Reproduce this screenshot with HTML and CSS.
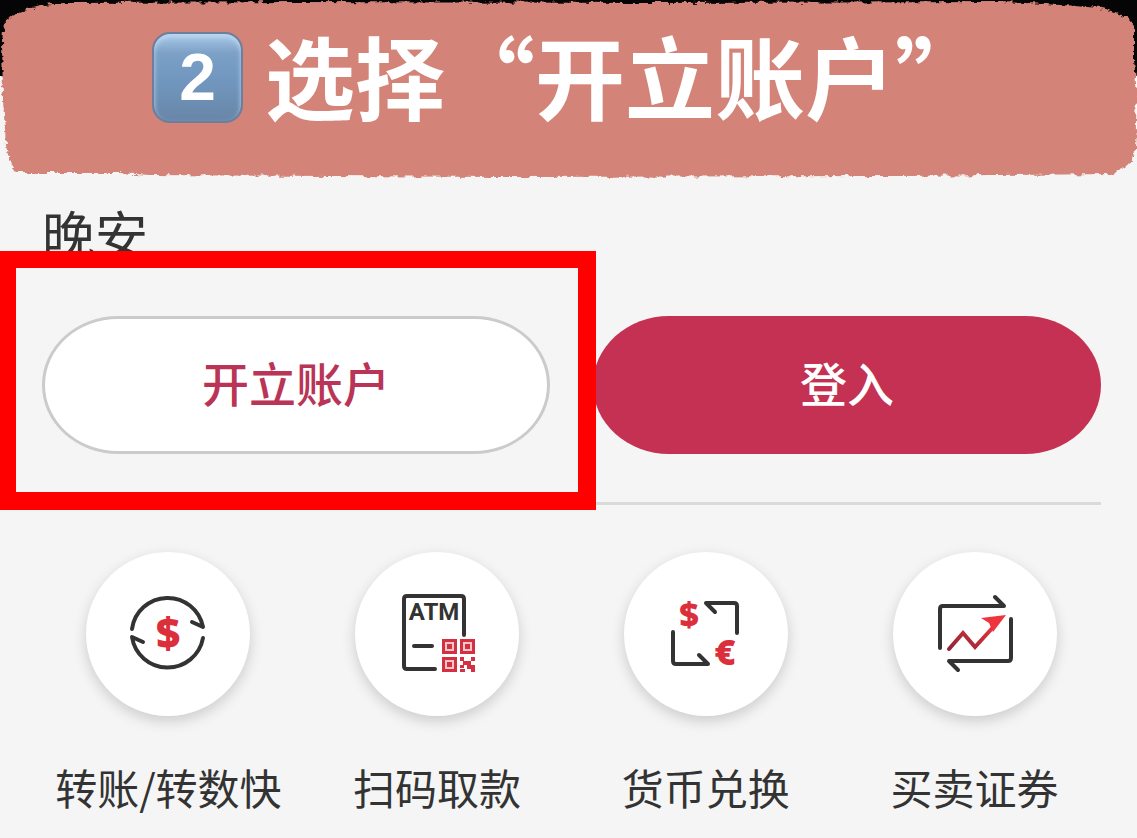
FILE: index.html
```html
<!DOCTYPE html>
<html lang="zh-CN">
<head>
  <meta charset="UTF-8" />
  <meta name="viewport" content="width=device-width, initial-scale=1.0" />
  <title>开立账户</title>
  <link rel="stylesheet" href="styles.css">
</head>
<body>
  <header class="banner">
    <svg class="banner-brush" viewBox="0 0 1137 180" preserveAspectRatio="none" aria-hidden="true">
      <defs>
        <filter id="rough" x="-2%" y="-5%" width="104%" height="110%">
          <feTurbulence type="fractalNoise" baseFrequency="0.12 0.2" numOctaves="3" seed="4" />
          <feDisplacementMap in="SourceGraphic" scale="7" xChannelSelector="R" yChannelSelector="G" />
        </filter>
      </defs>
      <path filter="url(#rough)" fill="#d38378" d="M4 22 Q14 12 32 8 Q50 3 70 3 L300 2 L640 3 L1000 2 Q1060 4 1100 8 Q1125 12 1134 26 L1134 60 L1137 95 L1135 152 Q1130 168 1112 174 L900 176 L500 177 L150 175 L120 173 L17 173 Q10 168 6 145 L3 100 L2 40 Z" />
    </svg>
    <div class="banner-content">
      <span class="keycap">2</span>
      <h1>选择“开立账户”</h1>
    </div>
  </header>

  <main>
    <section class="welcome">
      <p class="greeting">晚安</p>
      <div class="actions">
        <div class="highlight">
          <button type="button" class="btn btn-open">开立账户</button>
        </div>
        <button type="button" class="btn btn-login">登入</button>
      </div>
    </section>

    <!-- Shortcuts -->
    <nav class="shortcuts">
      <a href="#transfer" class="shortcut">
        <span class="circle">
          <svg viewBox="0 0 164 164" aria-hidden="true">
            <path class="line" d="M46 77 A36 36 0 0 1 117 75 L106 70 M57 90 L46 85 A36 36 0 0 0 117 86" />
            <text class="symbol" x="82" y="96" font-size="42">$</text>
          </svg>
        </span>
        <span class="label">转账/转数快</span>
      </a>
      <a href="#atm" class="shortcut">
        <span class="circle">
          <svg viewBox="0 0 164 164" aria-hidden="true">
            <path class="line" d="M109 83 V47 Q109 44 106 44 H52 Q49 44 49 47 V114 Q49 117 52 117 H80 M59 94 H77" />
            <text class="atm" x="79" y="68" font-size="24">ATM</text>
            <path class="qr" d="M87 87h15v15h-15zM105 87h15v15h-15zM87 105h15v15h-15zM105 105h4v4h3v4h-3v3h-4v-3h3v-4h-3zM116 105h4v4h-4zM112 109h4v4h4v7h-4v-3h-4zM105 117h5v3h-5z" />
            <path class="qr-eye" d="M91 91h7v7h-7zM109 91h7v7h-7zM91 109h7v7h-7z" />
          </svg>
        </span>
        <span class="label">扫码取款</span>
      </a>
      <a href="#exchange" class="shortcut">
        <span class="circle">
          <svg viewBox="0 0 164 164" aria-hidden="true">
            <path class="line" d="M91 60 L82 51 H110 Q113 51 113 54 V81 M49 80 V109 Q49 112 52 112 H84 L75 103" />
            <text class="symbol" x="65" y="75" font-size="34">$</text>
            <text class="symbol" x="101" y="113" font-size="36">€</text>
          </svg>
        </span>
        <span class="label">货币兑换</span>
      </a>
      <a href="#securities" class="shortcut">
        <span class="circle">
          <svg viewBox="0 0 164 164" aria-hidden="true">
            <defs>
              <linearGradient id="trend" x1="0" y1="1" x2="1" y2="0">
                <stop offset="0" stop-color="#8c2438" />
                <stop offset="1" stop-color="#f0353c" />
              </linearGradient>
            </defs>
            <path class="line" d="M47 96 V57 Q47 54 50 54 H111 L102 45 M118 67 V106 Q118 109 115 109 H56 L65 118" />
            <path fill="none" stroke="url(#trend)" stroke-width="4" stroke-linecap="round" d="M56 97 L70 81 L82 95 L103 72" />
            <path fill="#ee353d" d="M113 63 L88 66 L96 71 L100 80 Z" />
          </svg>
        </span>
        <span class="label">买卖证券</span>
      </a>
    </nav>
  </main>
</body>
</html>
```
FILE: styles.css
```css
* {
  box-sizing: border-box;
}
body {
  margin: 0;
  font-family: "Noto Sans CJK SC", sans-serif;
  background-color: #f5f5f5;
  color: #333;
}

/* Brush stroke banner */
.banner {
  position: relative;
  height: 180px;
  background: linear-gradient(#050505 76px, #f5f5f5 76px);
}
.banner-brush {
  position: absolute;
  top: 0;
  left: 0;
  width: 100%;
  height: 100%;
}
.banner-content {
  position: relative;
  display: flex;
  justify-content: center;
  align-items: center;
  gap: 22px;
  height: 154px;
}
.keycap {
  display: flex;
  justify-content: center;
  align-items: center;
  width: 91px;
  height: 91px;
  border: 2px solid #6d7f9c;
  border-radius: 18px;
  background: linear-gradient(#a9c9e8, #7ca0c6 22%, #7298c0 50%, #6886a8);
  box-shadow: inset 0 3px 5px #bcd7f0;
  color: white;
  font-family: "Liberation Sans", sans-serif;
  font-size: 66px;
  font-weight: bold;
  line-height: 1;
}
h1 {
  margin: 0;
  padding-bottom: 6px;
  color: white;
  font-size: 90px;
  font-weight: bold;
  line-height: 130px;
  white-space: nowrap;
}

/* Greeting and buttons */
.welcome {
  margin: 0 36px 0 42px;
  padding: 18px 0 48px;
  border-bottom: 3px solid #dadada;
}
.greeting {
  margin: 0 0 48px;
  font-size: 53px;
  line-height: 70px;
}
.actions {
  display: grid;
  grid-template-columns: 1fr 1fr;
  gap: 43px;
}
.highlight {
  position: relative;
}
/* Red frame over the open account button */
.highlight::after {
  content: "";
  position: absolute;
  top: -65px;
  right: -46px;
  bottom: -56px;
  left: -42px;
  z-index: 1;
  border: solid #fe0000;
  border-width: 17px 18px 18px 16px;
  pointer-events: none;
}
.btn {
  display: block;
  width: 100%;
  height: 138px;
  padding: 0 0 8px;
  border: none;
  border-radius: 76px / 69px;
  font-family: inherit;
  font-size: 47px;
  font-weight: 500;
  cursor: pointer;
}
.btn-open {
  border: 3px solid #cbcbcb;
  background-color: white;
  color: #b93456;
}
.btn-login {
  background-color: #c53152;
  color: white;
}

/* Shortcut icons */
.shortcuts {
  display: grid;
  grid-template-columns: repeat(4, 1fr);
  padding: 47px 28px 0 34px;
}
.shortcut {
  display: flex;
  flex-direction: column;
  align-items: center;
  gap: 41px;
  color: #333;
  text-decoration: none;
}
.circle {
  width: 164px;
  height: 164px;
  border-radius: 50%;
  background-color: white;
  box-shadow: 0 5px 14px rgba(0, 0, 0, 0.17);
}
.circle svg {
  display: block;
}
.label {
  font-size: 42px;
  line-height: 60px;
  white-space: nowrap;
}
.line {
  fill: none;
  stroke: #333;
  stroke-width: 4;
  stroke-linecap: round;
  stroke-linejoin: round;
}
.symbol {
  fill: #dc2f3c;
  font-family: "Open Sans", sans-serif;
  font-weight: 800;
  text-anchor: middle;
}
.atm {
  fill: #333;
  font-family: Roboto, sans-serif;
  font-weight: bold;
  text-anchor: middle;
}
.qr {
  fill: #d52f42;
}
.qr-eye {
  fill: #d52f42;
  stroke: #f8c5c9;
  stroke-width: 2;
}
```
